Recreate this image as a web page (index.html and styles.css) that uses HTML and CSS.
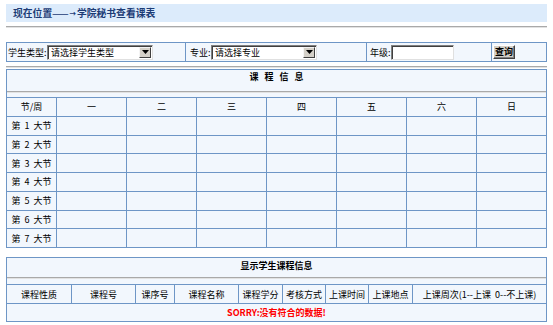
FILE: index.html
```html
<!DOCTYPE html>
<html lang="zh-CN">
<head>
<meta charset="utf-8">
<title>学院秘书查看课表</title>
<link rel="stylesheet" href="styles.css">
</head>
<body>
<div class="page">
  <div class="location">现在位置<span class="arrow">———→</span>学院秘书查看课表</div>
  <hr class="sep sep-top">

  <form class="query">
    <table class="grid form-grid">
      <colgroup>
        <col class="fc1"><col class="fc2"><col class="fc3"><col class="fc4">
      </colgroup>
      <tr>
        <td class="fcell fcell-1">
          <label class="field"><span class="lbl lbl-type">学生类型:</span>
            <span class="combo">
              <select class="combo-select"><option>请选择学生类型</option></select>
              <span class="combo-btn"><svg width="7" height="4" viewBox="0 0 7 4"><path d="M0 0H7L3.5 4Z" fill="#000"/></svg></span>
            </span>
          </label>
        </td>
        <td class="fcell fcell-2">
          <label class="field"><span class="lbl lbl-short">专业:</span>
            <span class="combo">
              <select class="combo-select"><option>请选择专业</option></select>
              <span class="combo-btn"><svg width="7" height="4" viewBox="0 0 7 4"><path d="M0 0H7L3.5 4Z" fill="#000"/></svg></span>
            </span>
          </label>
        </td>
        <td class="fcell fcell-3">
          <label class="field"><span class="lbl lbl-short">年级:</span>
            <input class="text-input" type="text">
          </label>
        </td>
        <td class="fcell fcell-4">
          <button class="btn" type="button">查询</button>
        </td>
      </tr>
    </table>
  </form>

  <hr class="sep sep-mid">

  <table class="grid schedule">
    <colgroup>
      <col class="sc-first">
      <col class="sc-day"><col class="sc-day"><col class="sc-day"><col class="sc-day"><col class="sc-day"><col class="sc-day"><col class="sc-day">
    </colgroup>
    <tr>
      <td class="title-cell" colspan="8">
        <div class="title-text title-spaced">课 程 信 息</div>
        <hr class="sep inner-sep">
      </td>
    </tr>
    <tr class="row">
      <th>节/周</th><th>一</th><th>二</th><th>三</th><th>四</th><th>五</th><th>六</th><th>日</th>
    </tr>
    <tr class="row"><td class="slot">第 1 大节</td><td></td><td></td><td></td><td></td><td></td><td></td><td></td></tr>
    <tr class="row"><td class="slot">第 2 大节</td><td></td><td></td><td></td><td></td><td></td><td></td><td></td></tr>
    <tr class="row"><td class="slot">第 3 大节</td><td></td><td></td><td></td><td></td><td></td><td></td><td></td></tr>
    <tr class="row"><td class="slot">第 4 大节</td><td></td><td></td><td></td><td></td><td></td><td></td><td></td></tr>
    <tr class="row"><td class="slot">第 5 大节</td><td></td><td></td><td></td><td></td><td></td><td></td><td></td></tr>
    <tr class="row"><td class="slot">第 6 大节</td><td></td><td></td><td></td><td></td><td></td><td></td><td></td></tr>
    <tr class="row"><td class="slot">第 7 大节</td><td></td><td></td><td></td><td></td><td></td><td></td><td></td></tr>
  </table>

  <table class="grid courses">
    <colgroup>
      <col class="cc1"><col class="cc2"><col class="cc3"><col class="cc4"><col class="cc5"><col class="cc6"><col class="cc7"><col class="cc8"><col class="cc9">
    </colgroup>
    <tr>
      <td class="title-cell title-cell-2" colspan="9">
        <div class="title-text title-text-2">显示学生课程信息</div>
        <hr class="sep inner-sep-2">
      </td>
    </tr>
    <tr class="row-c">
      <th>课程性质</th><th>课程号</th><th>课序号</th><th>课程名称</th><th>课程学分</th><th>考核方式</th><th>上课时间</th><th>上课地点</th><th>上课周次(1--上课&nbsp;&nbsp;0--不上课)</th>
    </tr>
    <tr class="row-c">
      <td class="empty" colspan="9">SORRY:没有符合的数据!</td>
    </tr>
  </table>
</div>
</body>
</html>
```

FILE: styles.css
```css
* { box-sizing: border-box; }
html, body { margin: 0; padding: 0; background: #fff; }
body {
  font-family: "Noto Sans CJK SC", "Noto Sans", sans-serif;
  font-size: 9px;
  color: #000;
}
.page {
  width: 541px;
  margin: 4px 0 0 6px;
}
.location {
  height: 18px;
  background: #dcebfb;
  display: flex;
  align-items: center;
  padding-left: 7px;
  font-weight: bold;
  font-size: 9.8px;
  color: #1d3c76;
}
.arrow { font-size: 6.5px; letter-spacing: 1px; }

.sep {
  margin: 0;
  height: 0;
  border: 0;
  border-top: 1px solid #a9a9a9;
  border-bottom: 1px solid #e2e2e2;
}
.sep-top { margin-top: 4px; }
.sep-mid { margin-top: 4px; }

.query { margin: 14px 0 0; }

.grid {
  border-collapse: separate;
  border-spacing: 1px;
  background: #6e96c6;
  table-layout: fixed;
  width: 541px;
}
.grid td, .grid th {
  background: #f2f7fd;
  padding: 0;
  text-align: center;
  vertical-align: middle;
  font-weight: normal;
  white-space: nowrap;
}

/* form row */
.fc1 { width: 178px; }
.fc2 { width: 180px; }
.fc3 { width: 124px; }
.fc4 { width: 54px; }
.grid .fcell { height: 18px; text-align: left; }
.fcell-1 { padding-left: 1px !important; }
.fcell-2 { padding-left: 4px !important; }
.fcell-3 { padding-left: 3px !important; }
.fcell-4 { padding-left: 1px !important; }
.field { display: flex; align-items: center; }
.lbl { display: inline-block; }
.lbl-type { width: 39px; }
.lbl-short { width: 21px; }

.combo {
  display: inline-flex;
  align-items: stretch;
  width: 106px;
  height: 15px;
  background: #fff;
  border: 1px solid;
  border-color: #808080 #e0e0e0 #e0e0e0 #808080;
  box-shadow: inset 1px 1px 0 #404040;
}
.combo-select {
  flex: 1;
  min-width: 0;
  appearance: none;
  -webkit-appearance: none;
  border: 0;
  background: transparent;
  font-family: inherit;
  font-size: 9px;
  color: #000;
  padding: 0 0 0 3px;
  margin: 0;
  height: 13px;
  line-height: 13px;
}
.combo-btn {
  width: 12px;
  margin: 1px 1px 1px 0;
  background: #d4d0c8;
  border: 1px solid;
  border-color: #f4f4f4 #404040 #404040 #f4f4f4;
  display: flex;
  align-items: center;
  justify-content: center;
}
.text-input {
  width: 63px;
  height: 15px;
  padding: 0 2px;
  margin: 0;
  background: #fff;
  border: 1px solid;
  border-color: #808080 #e0e0e0 #e0e0e0 #808080;
  box-shadow: inset 1px 1px 0 #404040;
  font-family: inherit;
  font-size: 9px;
}
.btn {
  width: 22px;
  height: 14px;
  padding: 0;
  margin: 0;
  background: #d4d0c8;
  border: 1px solid;
  border-color: #fff #404040 #404040 #fff;
  box-shadow: inset -1px -1px 0 #808080;
  font-family: inherit;
  font-size: 9px;
  font-weight: bold;
  color: #000;
  line-height: 12px;
}

/* schedule table */
.schedule { margin-top: 1px; }
.sc-first { width: 49px; }
.sc-day { width: 69px; }
.title-cell { padding: 0 !important; }
.title-text {
  height: 14px;
  line-height: 14px;
  font-weight: bold;
  font-size: 9px;
}
.title-spaced { word-spacing: 4px; }
.inner-sep { margin-top: 7px; margin-bottom: 4px; }
.grid .row th, .grid .row td { height: 17.75px; }
.grid .slot { word-spacing: 2px; }

/* course info table */
.courses { margin-top: 9px; }
.cc1 { width: 64px; }
.cc2 { width: 63px; }
.cc3 { width: 38px; }
.cc4 { width: 63px; }
.cc5 { width: 43px; }
.cc6 { width: 42px; }
.cc7 { width: 42px; }
.cc8 { width: 43px; }
.cc9 { width: 133px; }
.title-text-2 { height: 15px; line-height: 15px; }
.inner-sep-2 { margin-top: 4px; margin-bottom: 5px; }
.grid .row-c th { height: 18px; }
.grid .row-c td { height: 17px; }
.grid .empty { color: #ff0000; font-weight: bold; }
```
